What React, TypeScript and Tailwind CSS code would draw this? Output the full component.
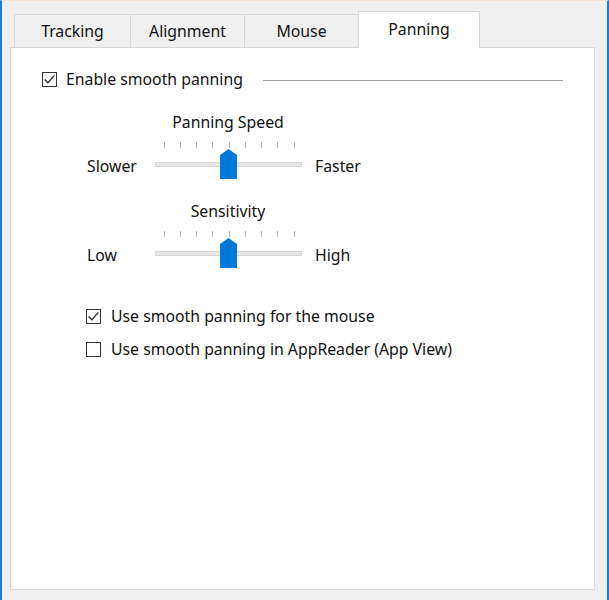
import React from "react";

const font = { fontFamily: '"Noto Sans", "Open Sans", sans-serif' };

function CheckBox({ checked }: { checked: boolean }) {
  return (
    <div className="w-[15px] h-[15px] border border-[#333333] bg-white shrink-0">
      {checked && (
        <svg width="13" height="13" viewBox="0 0 13 13" className="block">
          <path d="M1.6 6.4 L4.9 9.8 L11.4 2.4" fill="none" stroke="#333333" strokeWidth="1.4" />
        </svg>
      )}
    </div>
  );
}

function SliderDrawing() {
  const ticks = Array.from({ length: 9 }, (_, i) => 10.5 + i * 16.25);
  return (
    <svg width="150" height="42" viewBox="0 0 150 42" className="block shrink-0">
      {ticks.map((x, i) => (
        <line key={i} x1={Math.round(x) + 0.5} y1={4} x2={Math.round(x) + 0.5} y2={10} stroke="#b4b4b4" strokeWidth="1" />
      ))}
      <rect x="2.5" y="24.5" width="146" height="4" fill="#e7e7e7" stroke="#d6d6d6" strokeWidth="1" />
      <polygon points="67,17 75.5,11 84,17 84,41 67,41" fill="#0078d7" />
    </svg>
  );
}

function SliderBlock({ title, left, right }: { title: string; left: string; right: string }) {
  return (
    <div className="ml-[76px] flex flex-col">
      <div className="ml-[66px] w-[150px] text-center h-[22px] leading-[22px]">{title}</div>
      <div className="flex flex-row items-start mt-[5px]">
        <div className="w-[66px] mt-[17px] h-[22px] leading-[22px]">{left}</div>
        <SliderDrawing />
        <div className="ml-[12px] mt-[17px] h-[22px] leading-[22px]">{right}</div>
      </div>
    </div>
  );
}

export default function App() {
  return (
    <div
      className="w-[609px] h-[600px] bg-[#f0f0f0] border-l-2 border-r-2 border-l-[#1a7fd4] border-r-[#1a7fd4] border-t border-t-[#f3e4d8] flex flex-col text-[15.8px] text-[#111111]"
      style={font}
    >
      <div className="pt-[10px] pl-[12px] h-[46px] flex flex-row items-end">
        <div className="w-[116px] h-[33px] border-l border-t border-[#d9d9d9] flex items-center justify-center pt-[1px]">
          Tracking
        </div>
        <div className="w-[114px] h-[33px] border-l border-t border-[#d9d9d9] flex items-center justify-center pt-[1px]">
          Alignment
        </div>
        <div className="w-[114px] h-[33px] border-l border-t border-[#d9d9d9] flex items-center justify-center pt-[1px]">
          Mouse
        </div>
        <div className="relative z-10 w-[122px] h-[37px] -mb-px border-l border-t border-r border-[#d9d9d9] bg-white flex items-center justify-center pb-[1px]">
          Panning
        </div>
      </div>
      <div className="ml-[8px] w-[585px] h-[543px] border border-[#d9d9d9] bg-white flex flex-col pt-[20px]">
        <div className="ml-[31px] h-[22px] flex flex-row items-center">
          <CheckBox checked />
          <span className="ml-[9px] leading-[22px]">Enable smooth panning</span>
          <div className="flex-1 ml-[20px] mr-[31px] h-px bg-[#a0a0a0] mt-[2px]" />
        </div>
        <div className="mt-[21px]">
          <SliderBlock title="Panning Speed" left="Slower" right="Faster" />
        </div>
        <div className="mt-[20px]">
          <SliderBlock title="Sensitivity" left="Low" right="High" />
        </div>
        <div className="mt-[36px] ml-[75px] h-[22px] flex flex-row items-center">
          <CheckBox checked />
          <span className="ml-[10px] leading-[22px]">Use smooth panning for the mouse</span>
        </div>
        <div className="mt-[11px] ml-[75px] h-[22px] flex flex-row items-center">
          <CheckBox checked={false} />
          <span className="ml-[10px] leading-[22px]">Use smooth panning in AppReader (App View)</span>
        </div>
      </div>
    </div>
  );
}
